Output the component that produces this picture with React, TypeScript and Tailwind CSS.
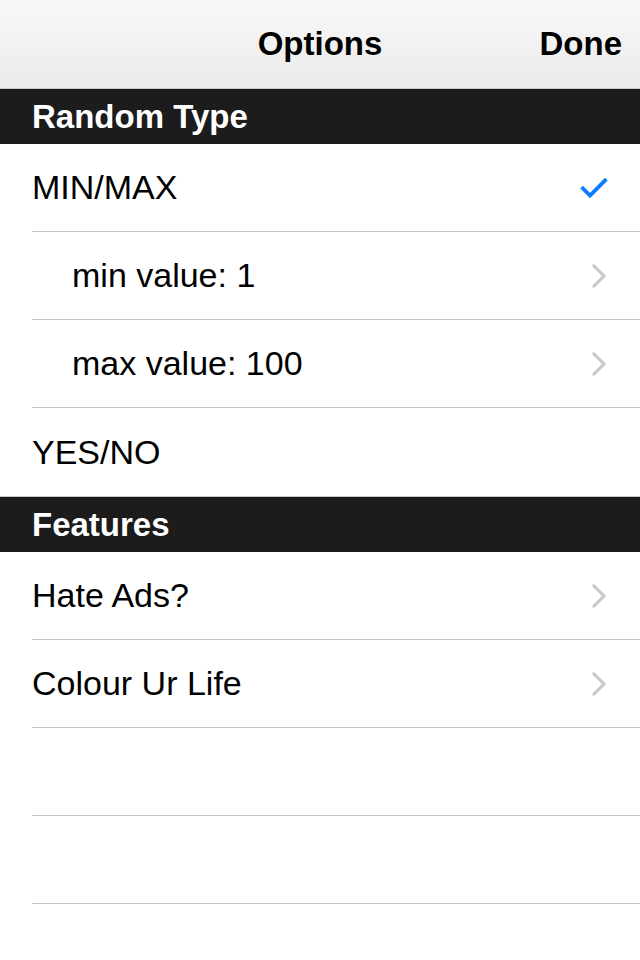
import { ReactNode } from 'react';

function Check() {
  return (
    <svg width="28" height="22" viewBox="0 0 28 22" fill="none">
      <path d="M3 11.5 L10 18.5 L25 3.5" stroke="#0a7aff" strokeWidth="3.8" strokeLinecap="square" />
    </svg>
  );
}

function Chevron() {
  return (
    <svg width="18" height="28" viewBox="0 0 18 28" fill="none">
      <path d="M3 3 L14 14 L3 25" stroke="#c7c7cc" strokeWidth="3" />
    </svg>
  );
}

function Header({ title }: { title: string }) {
  return (
    <div className="h-[56px] bg-[#1c1c1c] flex items-center px-8 border-t border-[#c8c8c8]">
      <span className="text-white font-bold text-[33px] leading-none">{title}</span>
    </div>
  );
}

function Row({ label, indent, accessory, last }: { label?: string; indent?: boolean; accessory?: ReactNode; last?: boolean }) {
  return (
    <div className="pl-8">
      <div className={`h-[88px] flex items-center pr-8 ${last ? '' : 'border-b border-[#c4c3c8]'}`}>
        <span className={`flex-1 text-[34px] text-black ${indent ? 'pl-10' : ''}`}>{label}</span>
        {accessory}
      </div>
    </div>
  );
}

export default function App() {
  return (
    <div className="w-[640px] h-[960px] bg-white overflow-hidden font-['Liberation_Sans',Arial,sans-serif]">
      <div className="h-[88px] bg-gradient-to-b from-[#f8f8f8] to-[#ebebeb] flex items-center relative">
        <span className="w-full text-center text-[33px] font-bold text-black">Options</span>
        <span className="absolute right-[18px] top-0 h-full flex items-center text-[33px] font-bold text-black">Done</span>
      </div>
      <Header title="Random Type" />
      <Row label="MIN/MAX" accessory={<Check />} />
      <Row label="min value: 1" indent accessory={<Chevron />} />
      <Row label="max value: 100" indent accessory={<Chevron />} />
      <Row label="YES/NO" last />
      <Header title="Features" />
      <Row label="Hate Ads?" accessory={<Chevron />} />
      <Row label="Colour Ur Life" accessory={<Chevron />} />
      <Row />
      <Row />
      <Row last />
    </div>
  );
}
